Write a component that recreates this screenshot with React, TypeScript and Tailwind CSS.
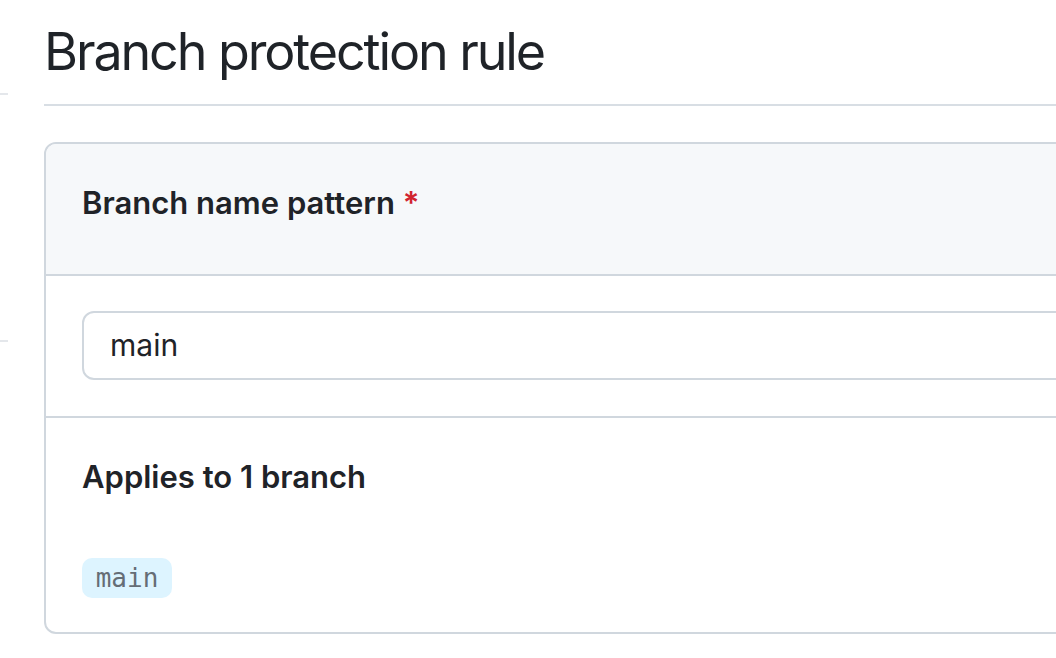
const App = () => {
  return (
    <div className="flex h-[658px] w-[1056px] overflow-hidden bg-white font-['Inter','Noto_Sans',sans-serif] text-[#1f2328]">
      {/* cut-off sidebar dividers */}
      <div className="w-[8px] shrink-0">
        <div className="mt-[93px] h-[2px] bg-[#e4e7eb]"></div>
        <div className="mt-[245px] h-[2px] bg-[#e4e7eb]"></div>
      </div>

      <div className="ml-[36px] w-[1100px] shrink-0">
        <h1 className="mt-[22px] text-[52px] leading-[60px] font-normal tracking-[-2.1px]">Branch protection rule</h1>
        <div className="mt-[22px] h-[2px] bg-[#d8dee4]"></div>

        <div className="mt-[36px] rounded-[12px] border-2 border-[#d0d7de]">
          <div className="h-[132px] rounded-t-[10px] border-b-2 border-[#d0d7de] bg-[#f6f8fa] px-[36px] pt-[41px]">
            <div className="text-[31px] leading-[36px] font-semibold">
              Branch name pattern <span className="text-[#d1242f]">*</span>
            </div>
          </div>

          <div className="border-b-2 border-[#d0d7de] px-[36px] pt-[35px] pb-[36px]">
            <div className="flex h-[69px] items-center rounded-[12px] border-2 border-[#d0d7de] pl-[26px] text-[30px]">
              main
            </div>
          </div>

          <div className="px-[36px] pt-[41px] pb-[34px]">
            <div className="text-[31px] leading-[36px] font-semibold">Applies to 1 branch</div>
            <div className="mt-[63px] flex h-[40px] w-[90px] items-center justify-center rounded-[10px] bg-[#ddf4ff] font-['DejaVu_Sans_Mono',monospace] text-[26px] text-[#656d76]">
              main
            </div>
          </div>
        </div>
      </div>
    </div>
  );
};

export default App;
